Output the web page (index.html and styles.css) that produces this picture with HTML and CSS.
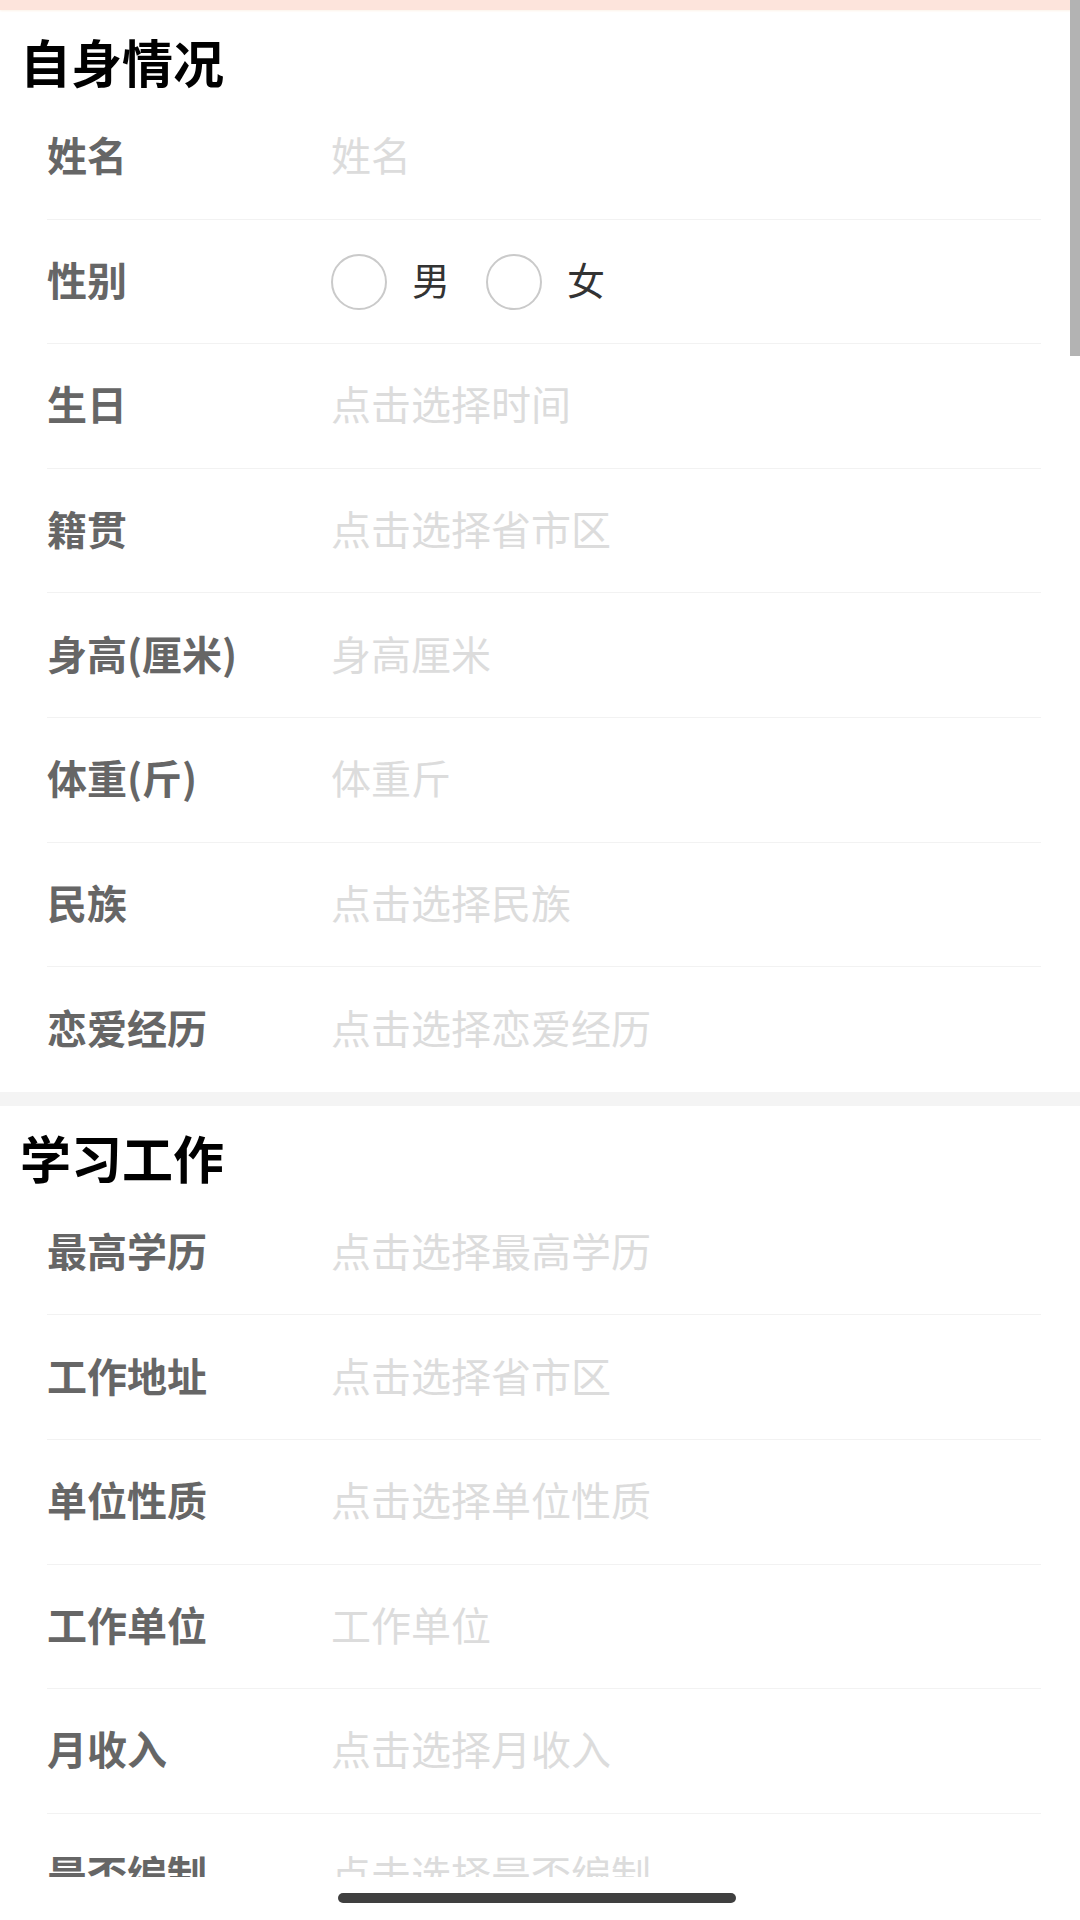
FILE: index.html
```
<!DOCTYPE html>
<html>
  <head>
    <meta charset="utf-8">
    <title>个人资料</title>
    <link rel="stylesheet" href="styles.css">
  </head>
  <body>
    <div class="screen">
      <div class="top-strip"></div>

      <div class="content">
        <section class="group">
          <h2 class="group-title">自身情况</h2>
          <div class="row">
            <span class="label">姓名</span>
            <span class="value placeholder">姓名</span>
          </div>
          <div class="row">
            <span class="label">性别</span>
            <div class="radios">
              <label class="radio"><span class="circle"></span>男</label>
              <label class="radio"><span class="circle"></span>女</label>
            </div>
          </div>
          <div class="row">
            <span class="label">生日</span>
            <span class="value placeholder">点击选择时间</span>
          </div>
          <div class="row">
            <span class="label">籍贯</span>
            <span class="value placeholder">点击选择省市区</span>
          </div>
          <div class="row">
            <span class="label">身高(厘米)</span>
            <span class="value placeholder">身高厘米</span>
          </div>
          <div class="row">
            <span class="label">体重(斤)</span>
            <span class="value placeholder">体重斤</span>
          </div>
          <div class="row">
            <span class="label">民族</span>
            <span class="value placeholder">点击选择民族</span>
          </div>
          <div class="row last">
            <span class="label">恋爱经历</span>
            <span class="value placeholder">点击选择恋爱经历</span>
          </div>
        </section>

        <section class="group">
          <h2 class="group-title">学习工作</h2>
          <div class="row">
            <span class="label">最高学历</span>
            <span class="value placeholder">点击选择最高学历</span>
          </div>
          <div class="row">
            <span class="label">工作地址</span>
            <span class="value placeholder">点击选择省市区</span>
          </div>
          <div class="row">
            <span class="label">单位性质</span>
            <span class="value placeholder">点击选择单位性质</span>
          </div>
          <div class="row">
            <span class="label">工作单位</span>
            <span class="value placeholder">工作单位</span>
          </div>
          <div class="row">
            <span class="label">月收入</span>
            <span class="value placeholder">点击选择月收入</span>
          </div>
          <div class="row">
            <span class="label">是否编制</span>
            <span class="value placeholder">点击选择是否编制</span>
          </div>
        </section>
      </div>

      <div class="home-area">
        <div class="home-bar"></div>
      </div>

      <div class="scrollbar"></div>
    </div>
  </body>
</html>
```

FILE: styles.css
```
html, body {
  margin: 0;
  padding: 0;
  background: #fff;
}
body {
  font-family: "Noto Sans CJK SC", "Noto Sans", sans-serif;
}
.screen {
  position: relative;
  width: 1080px;
  height: 1920px;
  display: flex;
  flex-direction: column;
  overflow: hidden;
}
.top-strip {
  height: 10px;
  background: #fde4dc;
  box-shadow: 0 1px 2px #fdf3ea;
  flex: none;
}
.content {
  flex: 1;
  overflow: hidden;
}
.group + .group {
  border-top: 14px solid #f4f4f4;
}
.group-title {
  margin: 0;
  padding: 26px 20px 8px;
  font-size: 51px;
  line-height: 51px;
  font-weight: 700;
  color: #000;
}
.row {
  display: flex;
  align-items: center;
  height: 124.6px;
  box-sizing: border-box;
  padding-bottom: 5px;
  margin: 0 39px 0 47px;
  border-bottom: 1px solid #f2f2f2;
  font-size: 40px;
}
.row.last {
  border-bottom: none;
}
.label {
  width: 284px;
  flex: none;
  font-weight: 700;
  color: #666;
}
.placeholder {
  color: #dcdcdc;
}
.radios {
  display: flex;
  align-items: center;
  gap: 36px;
}
.radio {
  display: flex;
  align-items: center;
  gap: 25px;
  font-size: 38px;
  color: #333;
}
.circle {
  width: 56px;
  height: 56px;
  margin-top: 7px;
  box-sizing: border-box;
  border: 2px solid #cacaca;
  border-radius: 50%;
}
.home-area {
  height: 43px;
  flex: none;
  display: flex;
  justify-content: center;
  padding: 16px 6px 0 0;
  box-sizing: border-box;
}
.home-bar {
  width: 398px;
  height: 10px;
  border-radius: 5px;
  background: #3f3f3f;
}
.scrollbar {
  position: absolute;
  top: 0;
  right: 0;
  width: 10px;
  height: 356px;
  background: #b3b3b3;
}
```
